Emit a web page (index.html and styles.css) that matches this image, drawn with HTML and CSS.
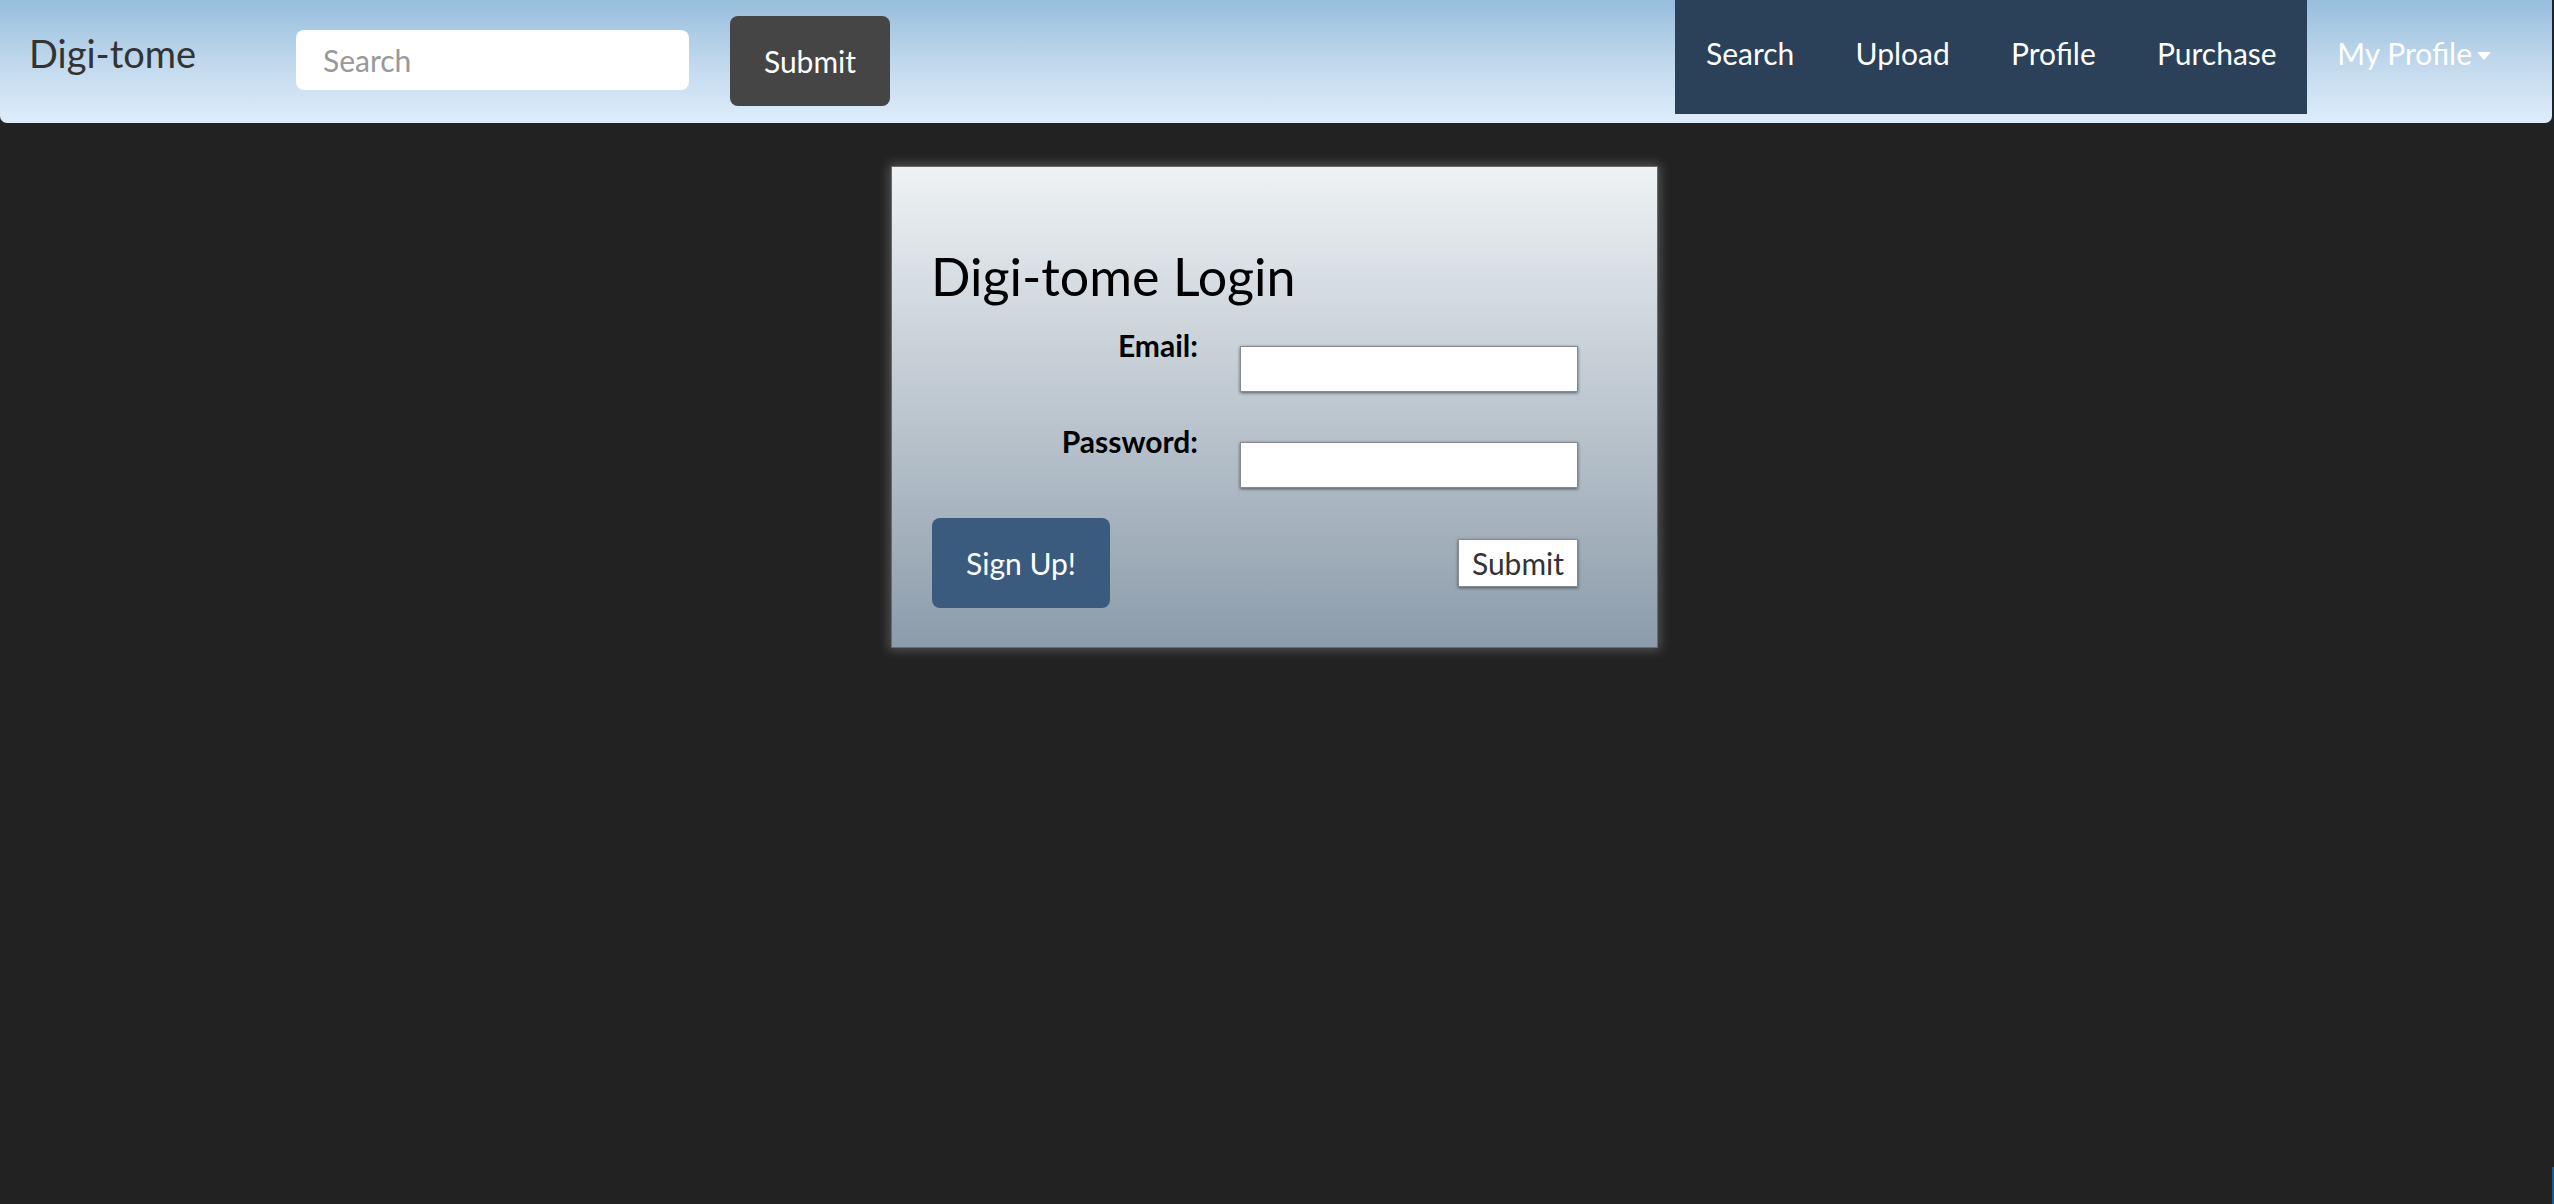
FILE: index.html
```html
<!DOCTYPE html>
<html lang="en">
<head>
<meta charset="utf-8">
<title>Digi-tome</title>
<link rel="stylesheet" href="styles.css">
</head>
<body>
<nav class="navbar">
  <a class="brand" href="#">Digi-tome</a>
  <form class="search-form">
    <input class="search-input" type="text" placeholder="Search">
    <button class="btn-dark" type="button">Submit</button>
  </form>
  <ul class="nav-main">
    <li><a href="#">Search</a></li>
    <li><a href="#">Upload</a></li>
    <li><a href="#">Profile</a></li>
    <li><a href="#">Purchase</a></li>
  </ul>
  <a class="nav-dropdown" href="#">My Profile<span class="caret"></span></a>
</nav>
<main class="page">
  <section class="login-card">
    <h1 class="login-title">Digi-tome Login</h1>
    <div class="form-row">
      <label class="form-label">Email:</label>
      <input class="form-input" type="text">
    </div>
    <div class="form-row form-row-second">
      <label class="form-label">Password:</label>
      <input class="form-input" type="password">
    </div>
    <div class="actions">
      <button class="btn-signup" type="button">Sign Up!</button>
      <button class="btn-submit" type="button">Submit</button>
    </div>
  </section>
</main>
<div class="edge-mark"></div>
</body>
</html>
```
FILE: styles.css
```css
html, body {
  margin: 0;
  padding: 0;
}
body {
  background: #222222;
  font-family: Lato, "Open Sans", sans-serif;
  min-height: 1204px;
}
.navbar {
  display: flex;
  align-items: flex-start;
  height: 123px;
  margin-right: 2px;
  padding-right: 31px;
  border-radius: 0 0 7px 7px;
  background: linear-gradient(to bottom, #97bedd 0%, #c3daee 55%, #deedfb 100%);
  box-sizing: border-box;
}
.brand {
  display: block;
  width: 296px;
  box-sizing: border-box;
  padding-left: 29px;
  margin-top: 30px;
  font-size: 38px;
  line-height: 46px;
  color: #333;
  text-decoration: none;
}
.search-form {
  display: flex;
  align-items: flex-start;
}
.search-input {
  margin-top: 30px;
  width: 393px;
  height: 60px;
  box-sizing: border-box;
  border: none;
  border-radius: 8px;
  padding: 0 27px;
  font-family: Lato, sans-serif;
  font-size: 30px;
  color: #333;
  background: #fff;
  outline: none;
}
.search-input::placeholder {
  color: #999;
}
.btn-dark {
  margin-left: 41px;
  margin-top: 16px;
  width: 160px;
  height: 90px;
  border: none;
  border-radius: 8px;
  background: #454545;
  color: #fff;
  font-family: Lato, sans-serif;
  font-size: 30px;
  padding: 0;
}
.nav-main {
  display: flex;
  margin: 0 0 0 auto;
  padding: 0;
  list-style: none;
  background: #2b4059;
  height: 114px;
}
.nav-main a {
  display: block;
  padding: 32px 30.6px 0;
  font-size: 30px;
  line-height: 42px;
  color: #fff;
  text-decoration: none;
}
.nav-dropdown {
  display: block;
  padding: 32px 30px 0;
  font-size: 30px;
  line-height: 42px;
  color: #fff;
  text-decoration: none;
}
.caret {
  display: inline-block;
  width: 0;
  height: 0;
  margin-left: 5px;
  vertical-align: 5px;
  border-top: 8px solid #fff;
  border-left: 7.5px solid transparent;
  border-right: 7.5px solid transparent;
}
.page {
  display: flex;
  justify-content: center;
  padding-top: 43px;
  padding-right: 5px;
}
.login-card {
  width: 767px;
  box-sizing: border-box;
  border: 1px solid #6b6b6b;
  padding: 79px 79px 39px 40px;
  background: linear-gradient(to bottom, #eef2f4 0%, #8c9cab 100%);
  box-shadow: 0 0 10px 2px rgba(150, 150, 150, 0.45);
}
.login-title {
  margin: 0 0 0 -1px;
  font-size: 52px;
  line-height: 60px;
  font-weight: 400;
  color: #000;
}
.form-row {
  display: grid;
  grid-template-columns: 266px 338px;
  column-gap: 42px;
  margin-top: 18px;
}
.form-row-second {
  margin-top: 28px;
}
.form-label {
  text-align: right;
  font-size: 30px;
  line-height: 42px;
  font-weight: 700;
  color: #000;
}
.form-input {
  margin-top: 22px;
  height: 46px;
  box-sizing: border-box;
  border: 1px solid #8a8a8a;
  background: #fff;
  box-shadow: 0 1px 3px rgba(0, 0, 0, 0.55);
  padding: 0 8px;
  font-family: Lato, sans-serif;
  font-size: 26px;
  outline: none;
}
.actions {
  display: flex;
  justify-content: space-between;
  align-items: center;
  margin-top: 30px;
}
.btn-signup {
  width: 178px;
  height: 90px;
  border: none;
  border-radius: 8px;
  background: #3a5a7e;
  color: #fff;
  font-family: Lato, sans-serif;
  font-size: 30px;
  padding: 0;
}
.btn-submit {
  width: 120px;
  height: 48px;
  box-sizing: border-box;
  border: 1px solid #8a8a8a;
  background: #fff;
  box-shadow: 0 1px 3px rgba(0, 0, 0, 0.5);
  color: #333;
  font-family: Lato, sans-serif;
  font-size: 30px;
  padding: 0;
}
.edge-mark {
  position: fixed;
  right: 0;
  bottom: 0;
  width: 2px;
  height: 37px;
  background: #1d5a8a;
}
```
